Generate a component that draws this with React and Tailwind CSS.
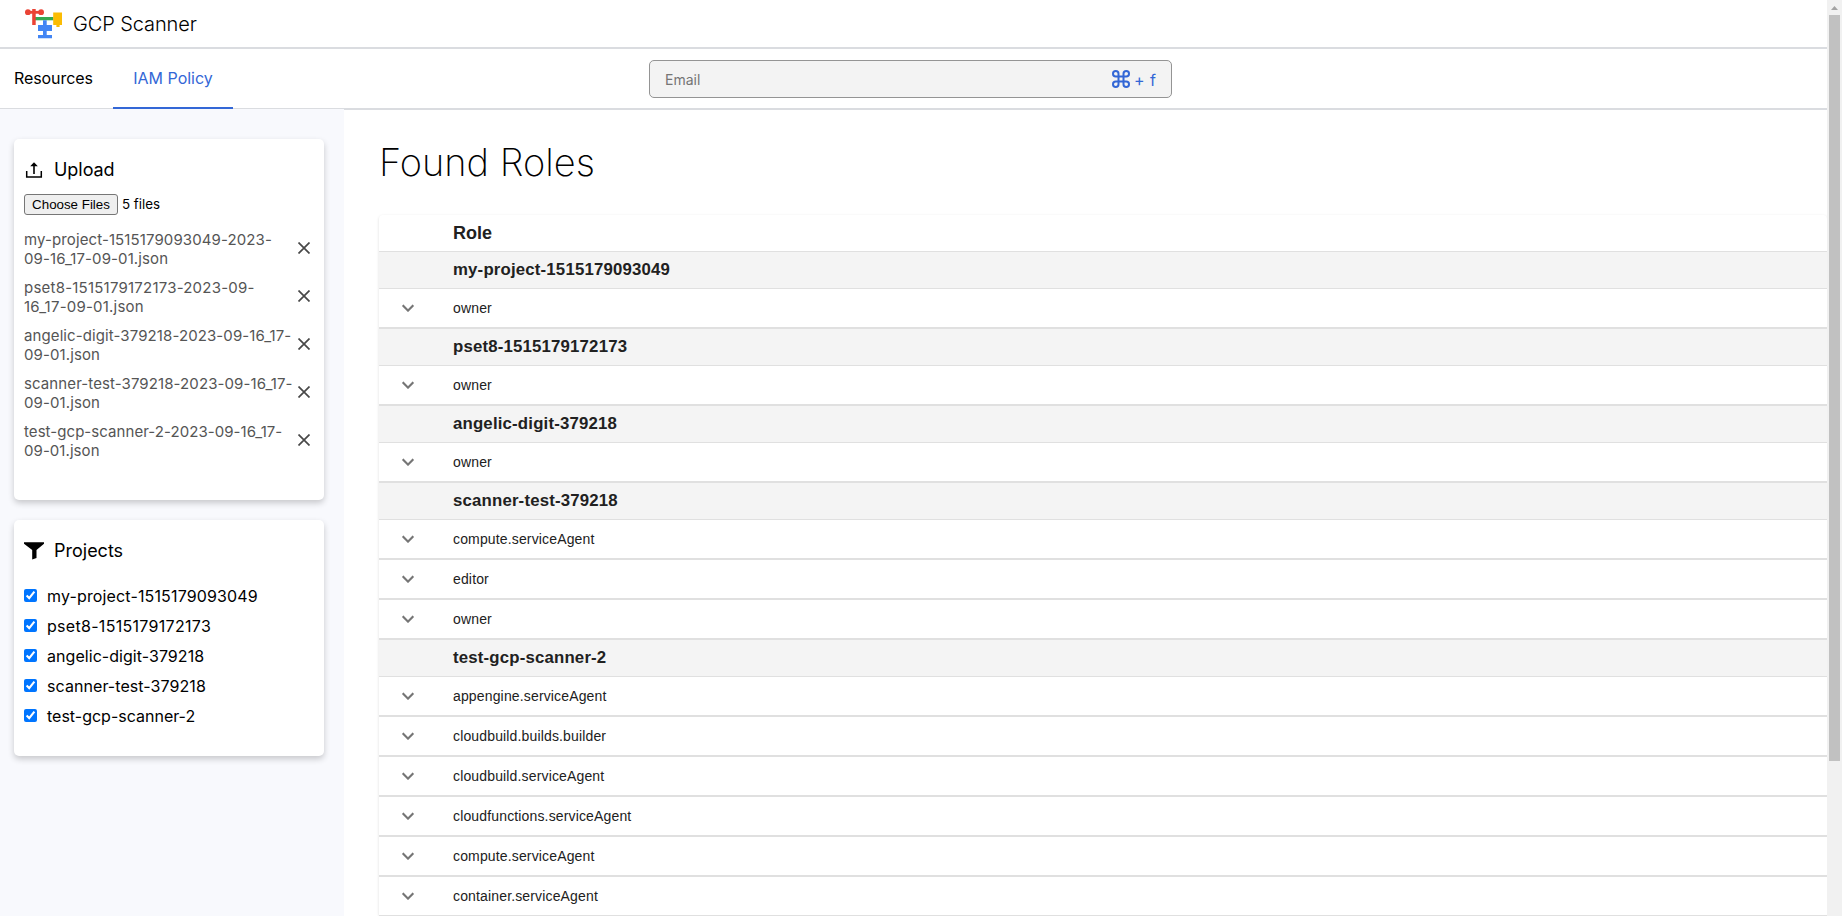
import React from 'react';

const files = [
  { name: 'my-project-1515179093049-2023-09-16_17-09-01.json', tracking: 'tracking-[0.11px]' },
  { name: 'pset8-1515179172173-2023-09-16_17-09-01.json', tracking: 'tracking-[0.22px]' },
  { name: 'angelic-digit-379218-2023-09-16_17-09-01.json', tracking: 'tracking-[0.1px]' },
  { name: 'scanner-test-379218-2023-09-16_17-09-01.json', tracking: 'tracking-[0.1px]' },
  { name: 'test-gcp-scanner-2-2023-09-16_17-09-01.json', tracking: 'tracking-[0.06px]' },
];

const groups = [
  { project: 'my-project-1515179093049', tracking: 'tracking-[0.15px]', roles: ['owner'] },
  { project: 'pset8-1515179172173', tracking: 'tracking-[0.3px]', roles: ['owner'] },
  { project: 'angelic-digit-379218', tracking: 'tracking-[0.05px]', roles: ['owner'] },
  {
    project: 'scanner-test-379218',
    tracking: 'tracking-[0.07px]',
    roles: ['compute.serviceAgent', 'editor', 'owner'],
  },
  {
    project: 'test-gcp-scanner-2',
    tracking: 'tracking-normal',
    roles: [
      'appengine.serviceAgent',
      'cloudbuild.builds.builder',
      'cloudbuild.serviceAgent',
      'cloudfunctions.serviceAgent',
      'compute.serviceAgent',
      'container.serviceAgent',
    ],
  },
];

function Logo() {
  return (
    <svg className="h-[31px] w-[40px]" viewBox="0 0 40 31">
      <rect x="11" y="9" width="18.500" height="3.300" fill="#34a853" />
      <g fill="#ea4335">
        <circle cx="3.900" cy="4.200" r="2.900" />
        <circle cx="17.100" cy="4.200" r="2.900" />
        <rect x="4" y="2.900" width="13" height="2.800" />
        <rect x="8.200" y="1" width="3.500" height="16" />
      </g>
      <path d="M29.200 4.500h8.800V17h-2.400v2h-3.200v-2h-3.200z" fill="#fbbc04" />
      <path d="M19 12.300h3.700V17H28v6h-5.300v4H28v3.200H14V27h5v-4h-5v-6h5z" fill="#4285f4" />
    </svg>
  );
}

function Header() {
  return (
    <header className="flex h-[49px] shrink-0 items-center border-b-2 border-[#dadce0] pl-[24px]">
      <Logo />
      <span className="ml-[9px] text-[20px] leading-[24px] font-light tracking-[-0.1px]">GCP Scanner</span>
    </header>
  );
}

function CommandIcon() {
  return (
    <svg className="size-[20px]" viewBox="0 0 20 20" fill="none" stroke="#3367d6" strokeWidth="2">
      <path d="M7.500 7.500V4.750A2.750 2.750 0 1 0 4.750 7.500h10.500A2.750 2.750 0 1 0 12.500 4.750v10.500A2.750 2.750 0 1 0 15.250 12.500H4.750A2.750 2.750 0 1 0 7.500 15.250z" />
    </svg>
  );
}

function Nav() {
  return (
    <nav className="flex h-[61px] shrink-0 border-b-2 border-[#dadce0] text-[16px] leading-[20px]">
      <div className="flex h-[60px] w-[649px]">
        <div className="flex h-[58px] w-[113px] items-center pl-[14px] tracking-[-0.08px]">Resources</div>
        <div className="flex h-[60px] w-[120px] items-center justify-center border-b-2 border-[#3367d6] text-[#3367d6]">
          IAM Policy
        </div>
      </div>
      <div className="mt-[11px] flex h-[38px] w-[523px] items-center rounded-[5px] border border-[#949494] bg-[#f3f3f3] pr-[15px] pl-[15px]">
        <span className="flex-1 pt-[2px] text-[14px] text-[#757575]">Email</span>
        <CommandIcon />
        <span className="ml-[3px] pt-px text-[16px] [word-spacing:1px] text-[#3367d6]">+ f</span>
      </div>
    </nav>
  );
}

function UploadIcon() {
  return (
    <svg className="mt-px size-[20px]" viewBox="0 0 20 20" fill="none" stroke="#000">
      <path d="M2.700 11v6h14.600v-6" strokeWidth="1.500" />
      <path d="M10 14V5" strokeWidth="1.600" />
      <path d="M10 2.300l3.800 4H6.200z" fill="#000" stroke="none" />
    </svg>
  );
}

function FilterIcon() {
  return (
    <svg className="mt-[2px] h-[20px] w-[20px]" viewBox="0 0 20 20">
      <path d="M0 1.200h20v1.600l-7.500 6.200v8l-4.300 1.500V9L0 2.800z" fill="#000" />
    </svg>
  );
}

function CloseIcon() {
  return (
    <svg className="size-[12px] shrink-0" viewBox="0 0 12 12" stroke="#484848" strokeWidth="1.700">
      <path d="M.5 .5l11 11M11.500 .5l-11 11" />
    </svg>
  );
}

const cardClass = 'w-[310px] rounded-[5px] bg-white px-[10px] shadow-[0_3px_6px_rgba(0,0,0,0.2)]';

function Sidebar() {
  return (
    <aside className="relative -mt-px w-[344px] shrink-0 bg-[#f8f9fd] pt-[30px] pl-[14px]">
      <section className={cardClass + ' h-[361px] pt-[18px]'}>
        <div className="flex h-[24px] items-center">
          <UploadIcon />
          <h2 className="ml-[10px] pt-px text-[18px] tracking-[-0.05px]">Upload</h2>
        </div>
        <div className="mt-[13px] flex h-[21px] items-center text-[13.333px]">
          <button className="h-[21px] w-[94px] rounded-[3px] border border-[#767676] bg-[#efefef] font-['Liberation_Sans',sans-serif] leading-[15px]">
            Choose Files
          </button>
          <span className="ml-[4px]">5 files</span>
        </div>
        <ul className="mt-[10px]">
          {files.map(({ name, tracking }) => (
            <li key={name} className="flex h-[48px] items-center">
              <span className={'w-[271px] shrink-0 text-[15px] leading-[19px] text-[#555] ' + tracking}>{name}</span>
              <span className="ml-[3px] -mt-[2px]">
                <CloseIcon />
              </span>
            </li>
          ))}
        </ul>
      </section>
      <section className={cardClass + ' mt-[20px] h-[236px] pt-[18px]'}>
        <div className="flex h-[24px] items-center">
          <FilterIcon />
          <h2 className="ml-[10px] pt-px text-[18px]">Projects</h2>
        </div>
        <ul className="mt-[19px]">
          {groups.map(({ project, tracking }) => (
            <li key={project} className="flex h-[30px] items-center text-[16px]">
              <input type="checkbox" defaultChecked className="m-0 -mt-[2px] size-[13px]" />
              <span className={'ml-[10px] ' + tracking}>{project}</span>
            </li>
          ))}
        </ul>
      </section>
    </aside>
  );
}

function Chevron() {
  return (
    <svg className="size-[24px]" viewBox="0 0 24 24" fill="#757575" stroke="#757575" strokeWidth="0.150">
      <path d="M7.410 8.590 12 13.170l4.590-4.580L18 10l-6 6-6-6z" />
    </svg>
  );
}

function RolesTable() {
  return (
    <div className="mt-[29px] rounded-[4px] font-['Liberation_Sans',sans-serif] text-[#212121] shadow-[0_1px_3px_rgba(0,0,0,0.14)]">
      <div className="flex h-[37px] items-center border-b border-[#e0e0e0] pl-[74px] text-[18px] font-bold">Role</div>
      {groups.map(({ project, roles }) => (
        <div key={project}>
          <div className="flex h-[37px] items-center border-b border-[#e0e0e0] bg-[#f4f4f4] pl-[74px] text-[16.800px] font-bold tracking-[0.18px]">
            {project}
          </div>
          {roles.map((role) => (
            <div key={role} className="flex h-[40px] items-center border-b-2 border-[#e0e0e0] bg-white pl-[17px] text-[14px] tracking-[0.15px]">
              <Chevron />
              <span className="ml-[33px]">{role}</span>
            </div>
          ))}
        </div>
      ))}
    </div>
  );
}

function Scrollbar() {
  return (
    <div className="flex w-[15px] shrink-0 flex-col items-center bg-[#f1f1f1]">
      <svg className="h-[15px] w-[15px] shrink-0" viewBox="0 0 15 15">
        <path d="M4 10h7L7.500 6z" fill="#a3a3a3" />
      </svg>
      <div className="h-[746px] w-[11px] bg-[#c1c1c1]" />
    </div>
  );
}

export default function App() {
  return (
    <div className="flex h-[916px] w-[1842px] overflow-hidden bg-white font-['Inter',sans-serif] text-black">
      <div className="flex min-w-0 flex-1 flex-col overflow-hidden">
        <Header />
        <Nav />
        <div className="flex min-h-0 flex-1">
          <Sidebar />
          <main className="min-w-0 flex-1 pt-[28px] pl-[35px]">
            <h1 className="text-[38px] leading-[48px] font-extralight">Found Roles</h1>
            <RolesTable />
          </main>
        </div>
      </div>
      <Scrollbar />
    </div>
  );
}
